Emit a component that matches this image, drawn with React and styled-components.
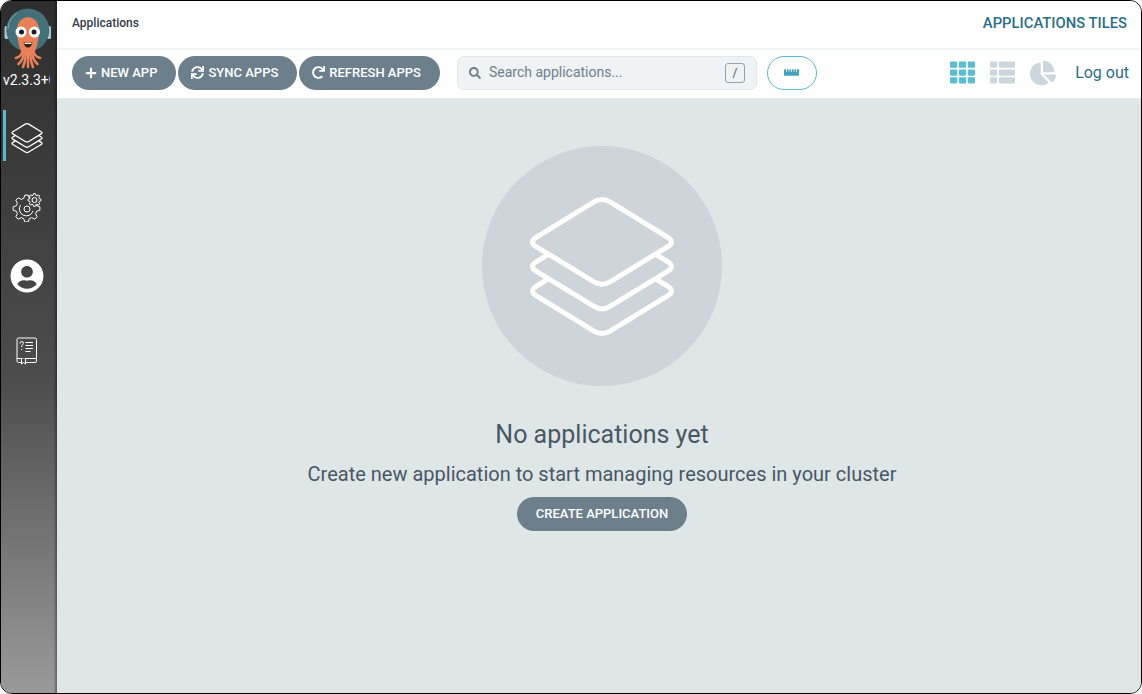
import styled, { createGlobalStyle } from "styled-components";
import {
  FaPlus,
  FaSync,
  FaRedo,
  FaSearch,
  FaRulerHorizontal,
  FaTh,
  FaThList,
  FaChartPie,
  FaUserCircle,
} from "react-icons/fa";

const GlobalStyle = createGlobalStyle`
  html, body {
    margin: 0;
    padding: 0;
    background: #fff;
  }
  body {
    font-family: Roboto, "Liberation Sans", sans-serif;
  }
  * {
    box-sizing: border-box;
  }
`;

const Frame = styled.div`
  width: 1142px;
  height: 694px;
  display: flex;
  border: 1px solid #000;
  border-radius: 12px;
  overflow: hidden;
  background: #dee6e8;
`;

const Sidebar = styled.nav`
  width: 56px;
  flex-shrink: 0;
  display: flex;
  flex-direction: column;
  background: linear-gradient(180deg, #2d2d2d 0%, #4d4d4d 55%, #9a9a9a 100%);
  box-shadow: inset -3px 0 2px -1px rgba(0, 0, 0, 0.3);
`;

const Logo = styled.svg`
  width: 50px;
  height: 62px;
  margin: 6px 0 0 2px;
  flex-shrink: 0;
`;

const Version = styled.div`
  width: 47px;
  margin: 1px 0 0 2px;
  overflow: hidden;
  white-space: nowrap;
  font-size: 14px;
  line-height: 20px;
  color: #fff;
`;

const NavItem = styled.div`
  position: relative;
  width: 100%;
  height: 69px;
  flex-shrink: 0;
  display: flex;
  align-items: center;
  justify-content: center;
  padding-right: 4px;
  color: #fff;

  ${(p) =>
    p.$active &&
    `
    margin-top: 13px;
    &::before {
      content: "";
      position: absolute;
      left: 2px;
      top: 7px;
      width: 3px;
      height: 51px;
      background: #5cb8cf;
    }
  `}
`;

const BookItem = styled(NavItem)`
  margin-top: 6px;
`;

const Main = styled.div`
  flex: 1;
  min-width: 0;
  display: flex;
  flex-direction: column;
`;

const TopBar = styled.header`
  height: 49px;
  flex-shrink: 0;
  display: flex;
  align-items: center;
  justify-content: space-between;
  padding: 0 14px 3px 15px;
  background: #fff;
  border-bottom: 2px solid #eff3f5;
`;

const Breadcrumb = styled.div`
  font-size: 12px;
  font-weight: 500;
  color: #363c4a;
`;

const PageTitle = styled.div`
  font-size: 14.8px;
  font-weight: 500;
  color: #2a6f88;
`;

const ToolBar = styled.div`
  height: 49px;
  flex-shrink: 0;
  display: flex;
  align-items: center;
  padding: 0 12px 3px 15px;
  background: #fff;
  border-bottom: 1px solid #e4eaed;
`;

const ActionGroup = styled.div`
  display: flex;
  gap: 2px;
`;

const PillButton = styled.button`
  height: 34px;
  display: inline-flex;
  align-items: center;
  justify-content: center;
  gap: 4px;
  padding: 0 19px 0 13px;
  border: 0;
  border-radius: 17px;
  background: #6d7f8b;
  color: #fff;
  font-family: inherit;
  font-size: 13px;
  font-weight: 500;
`;

const SearchBox = styled.div`
  width: 300px;
  height: 34px;
  margin-left: 17px;
  display: flex;
  align-items: center;
  gap: 8px;
  padding: 0 11px;
  background: #eff3f5;
  border: 1px solid #dee6eb;
  border-radius: 7px;
  color: #6d7f8b;
  font-size: 14px;
  svg {
    color: #6d7f8b;
  }
`;

const SearchText = styled.span`
  flex: 1;
  padding-bottom: 2px;
`;

const Key = styled.span`
  width: 20px;
  height: 20px;
  display: flex;
  align-items: center;
  justify-content: center;
  border: 1px solid #8fa4b1;
  border-radius: 3px;
  color: #495763;
  font-size: 12px;
`;

const RulerButton = styled.button`
  width: 50px;
  height: 34px;
  margin-left: 10px;
  display: flex;
  align-items: center;
  justify-content: center;
  background: #fff;
  border: 1px solid #5cb8cf;
  border-radius: 17px;
  color: #44a1b8;
  padding: 0;
`;

const ViewIcons = styled.div`
  margin-left: auto;
  display: flex;
  align-items: center;
  gap: 15px;
`;

const ViewIcon = styled.span`
  display: flex;
  color: ${(p) => (p.$active ? "#5cbcd2" : "#ccd6dd")};
`;

const LogOut = styled.span`
  margin-left: 4px;
  font-size: 16px;
  color: #2a6f88;
`;

const Content = styled.main`
  flex: 1;
  display: flex;
  flex-direction: column;
  align-items: center;
  padding: 47px 0 0 6px;
  background: #dee6e8;
`;

const EmptyCircle = styled.div`
  width: 240px;
  height: 240px;
  display: flex;
  align-items: center;
  justify-content: center;
  border-radius: 50%;
  background: #cdd5da;
`;

const EmptyTitle = styled.div`
  margin-top: 32px;
  font-size: 25px;
  line-height: 34px;
  color: #495763;
`;

const EmptyText = styled.div`
  margin-top: 8px;
  font-size: 20px;
  line-height: 28px;
  color: #495763;
`;

const CreateButton = styled(PillButton)`
  margin-top: 9px;
  padding: 0 18.5px 1px;
`;

const LayersIcon = ({ size = 148, strokeWidth = 5 }) => (
  <svg width={size} height={size} viewBox="0 0 148 148" fill="none" stroke="#fff" strokeWidth={strokeWidth} strokeLinejoin="round">
    <path d="M20 87.2 L8.5 94.22 Q.5 99.1 8.5 103.98 L66 139.06 Q74 143.94 82 139.06 L139.5 103.98 Q147.5 99.1 139.5 94.22 L128 87.2" />
    <path d="M20 62.6 L8.5 69.62 Q.5 74.5 8.5 79.38 L66 114.46 Q74 119.34 82 114.46 L139.5 79.38 Q147.5 74.5 139.5 69.62 L128 62.6" />
    <path d="M66 9.94 Q74 5.06 82 9.94 L139.5 45.02 Q147.5 49.9 139.5 54.78 L82 89.86 Q74 94.74 66 89.86 L8.5 54.78 Q.5 49.9 8.5 45.02 Z" />
  </svg>
);

// outline of a toothed wheel, as polygon points
const gearPoints = (cx, cy, outer, inner, teeth) => {
  const points = [];
  const step = (Math.PI * 2) / teeth;
  for (let i = 0; i < teeth; i++) {
    const a = i * step;
    [
      [a - step * 0.34, inner],
      [a - step * 0.16, outer],
      [a + step * 0.16, outer],
      [a + step * 0.34, inner],
    ].forEach(([angle, r]) => {
      points.push(`${(cx + Math.cos(angle) * r).toFixed(2)},${(cy + Math.sin(angle) * r).toFixed(2)}`);
    });
  }
  return points.join(" ");
};

const GearsIcon = () => (
  <svg width="30" height="30" viewBox="0 0 30 30" fill="none" stroke="#fff" strokeWidth="1" strokeLinejoin="round">
    <polygon points={gearPoints(14.5, 16.5, 13.5, 10.5, 8)} />
    <path d="M8.5 13 A7 7 0 1 0 21 19" />
    <circle cx="15" cy="17" r="3" />
    <polygon fill="#444" points={gearPoints(22.5, 8, 6.5, 5, 8)} />
    <circle cx="22.5" cy="8" r="2.5" />
  </svg>
);

const BookIcon = () => (
  <svg width="22" height="28" viewBox="0 0 22 28" fill="none" stroke="#fff" strokeWidth="1">
    <path d="M2.5 1 H19 Q20.5 1 20.5 2.5 V24 Q20.5 25.5 19 25.5 H2.5 Q1 25.5 1 24 V2.5 Q1 1 2.5 1 Z" />
    <path d="M1 21.5 H20.5" />
    <path d="M5.5 21.5 V27 L7.5 25.5 L9.5 27 V21.5" fill="#444" />
    <path d="M9.5 5.5 H17 M9.5 8.5 H17 M9.5 11.5 H17 M9.5 14.5 H14.5" />
    <path d="M4 6.5 Q4 4.5 5.7 4.5 Q7.4 4.5 7.4 6.3 Q7.4 7.5 5.7 8.7 V10 M5.7 12 V13" />
  </svg>
);

const ArgoLogo = () => (
  <Logo viewBox="0 0 50 62">
    <rect x="1.5" y="19" width="4" height="13" rx="1.5" fill="#a8c6cf" />
    <rect x="44" y="19" width="4" height="13" rx="1.5" fill="#a8c6cf" />
    <circle cx="24.8" cy="23" r="21.5" fill="#44707a" />
    <path d="M5 22 A20 20 0 0 1 14 6" fill="none" stroke="#7fa3ab" strokeWidth="1" />
    <path d="M14 23 C14 6 36 6 36 23 C36 30 35 37 32 44 L18 44 C15 37 14 30 14 23 Z" fill="#e8805a" />
    <g fill="none" stroke="#e8805a" strokeWidth="2.6" strokeLinecap="round">
      <path d="M20 42 C19 48 17 50 13 51" />
      <path d="M21 43 C21 50 19 54 15.5 57" />
      <path d="M23 43 C23 50 22 55 20 60" />
      <path d="M25 43 V60" />
      <path d="M27 43 C27 50 28 55 30 60" />
      <path d="M29 43 C29 50 31 54 34.5 57" />
      <path d="M30 42 C31 48 33 50 37 51" />
    </g>
    <circle cx="18" cy="25" r="5.5" fill="#fff" />
    <circle cx="31.5" cy="25" r="5.5" fill="#fff" />
    <circle cx="18.5" cy="25" r="2.5" fill="#1c1c1c" />
    <circle cx="31" cy="25" r="2.5" fill="#1c1c1c" />
    <path d="M20.5 35 Q25 37 29.5 35 Q28.5 40.5 25 40.5 Q21.5 40.5 20.5 35 Z" fill="#3a1f1a" />
    <path d="M21.5 35.5 Q25 36.8 28.5 35.5 L28.3 37 L21.8 37 Z" fill="#fff" />
  </Logo>
);

export default function App() {
  return (
    <>
      <GlobalStyle />
      <Frame>
        <Sidebar>
          <ArgoLogo />
          <Version>v2.3.3+0</Version>
          <NavItem $active>
            <LayersIcon size={32} strokeWidth={6} />
          </NavItem>
          <NavItem>
            <GearsIcon />
          </NavItem>
          <NavItem>
            <FaUserCircle size={34} />
          </NavItem>
          <BookItem>
            <BookIcon />
          </BookItem>
        </Sidebar>
        <Main>
          <TopBar>
            <Breadcrumb>Applications</Breadcrumb>
            <PageTitle>APPLICATIONS TILES</PageTitle>
          </TopBar>
          <ToolBar>
            <ActionGroup>
              <PillButton>
                <FaPlus size={12} />
                NEW APP
              </PillButton>
              <PillButton>
                <FaSync size={13} />
                SYNC APPS
              </PillButton>
              <PillButton>
                <FaRedo size={13} />
                REFRESH APPS
              </PillButton>
            </ActionGroup>
            <SearchBox>
              <FaSearch size={12} />
              <SearchText>Search applications...</SearchText>
              <Key>/</Key>
            </SearchBox>
            <RulerButton>
              <FaRulerHorizontal size={15} />
            </RulerButton>
            <ViewIcons>
              <ViewIcon $active>
                <FaTh size={25} />
              </ViewIcon>
              <ViewIcon>
                <FaThList size={25} />
              </ViewIcon>
              <ViewIcon>
                <FaChartPie size={26} />
              </ViewIcon>
              <LogOut>Log out</LogOut>
            </ViewIcons>
          </ToolBar>
          <Content>
            <EmptyCircle>
              <LayersIcon />
            </EmptyCircle>
            <EmptyTitle>No applications yet</EmptyTitle>
            <EmptyText>Create new application to start managing resources in your cluster</EmptyText>
            <CreateButton>CREATE APPLICATION</CreateButton>
          </Content>
        </Main>
      </Frame>
    </>
  );
}
